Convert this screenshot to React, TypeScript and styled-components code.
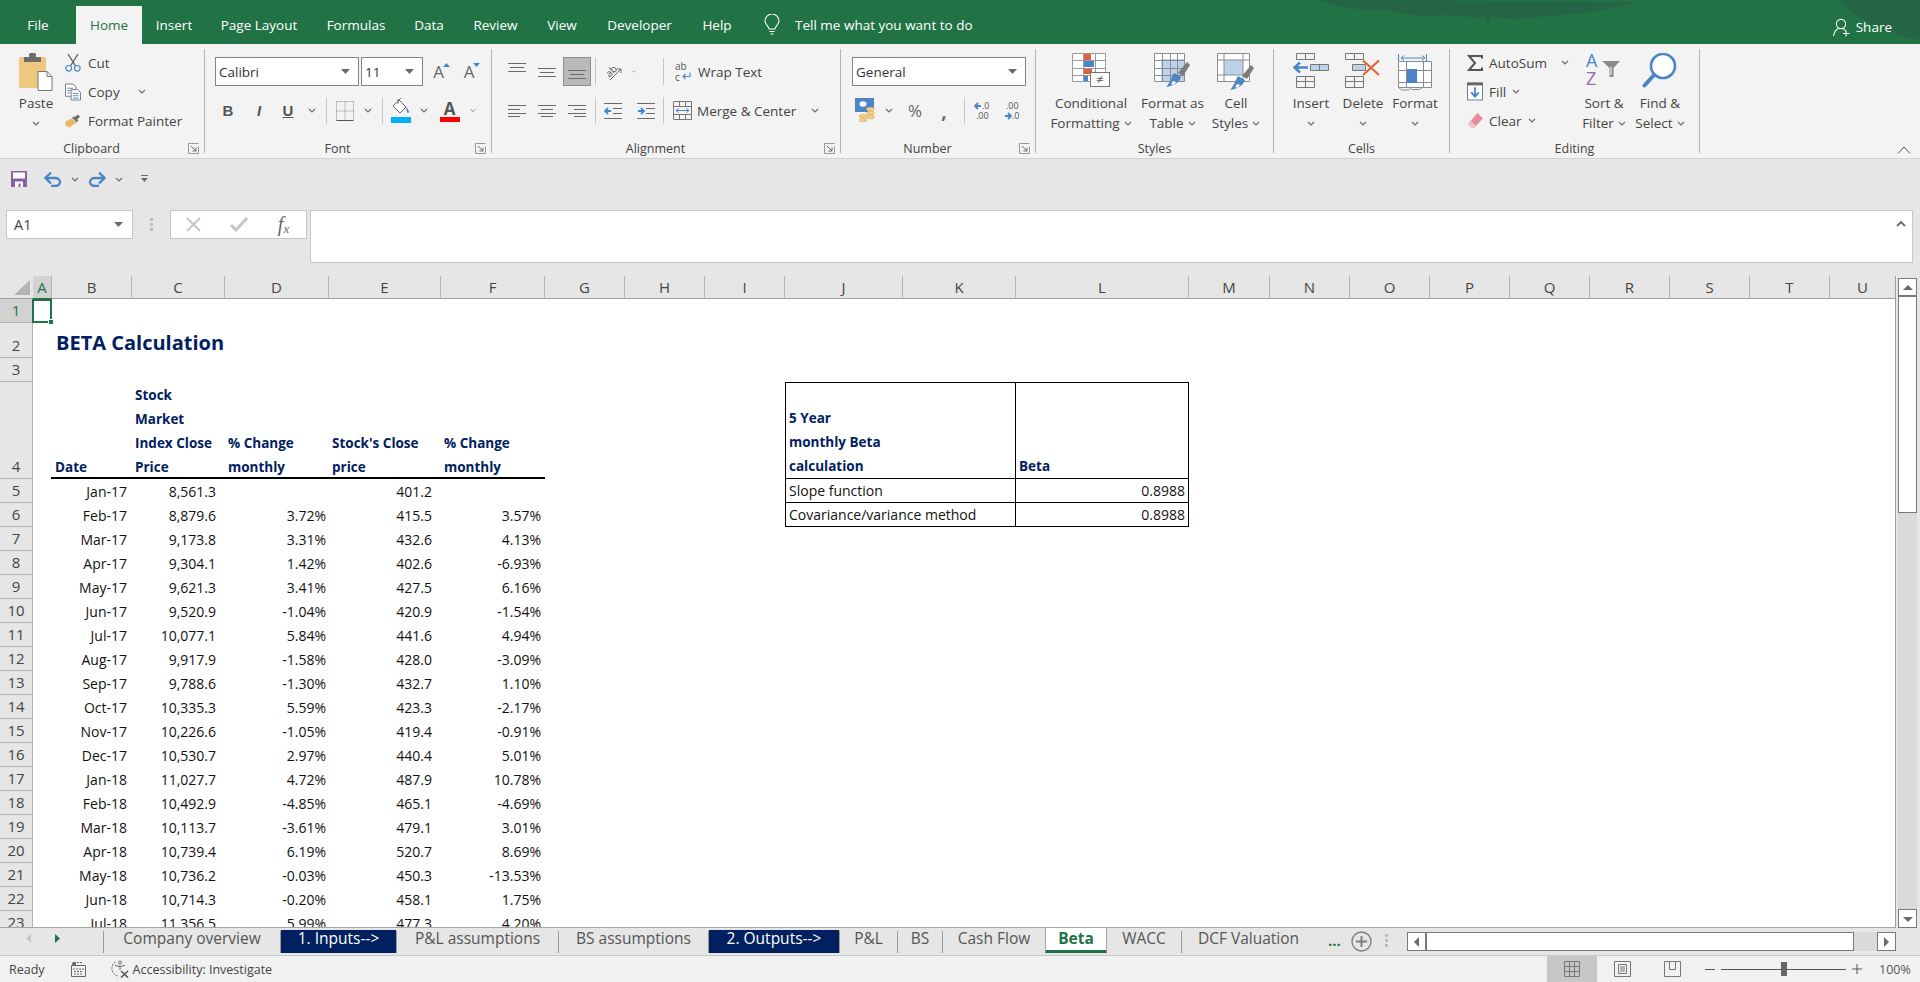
import React from "react";
import styled, { createGlobalStyle } from "styled-components";

const UI_FONT = `"Open Sans", "Noto Sans", sans-serif`;
const GRAY = "#6a6a6a";
const BLUE = "#4a86c5";
const PALE = "#bcd2e8";
const RED = "#e0623a";
const NAVY = "#002060";
const GREEN = "#217346";

const GlobalStyle = createGlobalStyle`
  html, body {
    margin: 0;
    padding: 0;
    background: #e6e6e6;
    overflow: hidden;
  }
  * {
    box-sizing: border-box;
  }
`;

const Page = styled.div`
  width: 1920px;
  height: 982px;
  display: flex;
  flex-direction: column;
  overflow: hidden;
  background: #e6e6e6;
  color: #444;
  font-family: ${UI_FONT};
  font-size: 13.5px;
`;

/* ---------- title bar ---------- */

const TitleBar = styled.div`
  position: relative;
  height: 44px;
  flex: none;
  display: flex;
  align-items: flex-end;
  background: ${GREEN};
  color: #fff;
  overflow: hidden;
`;

const Leaves = styled.svg`
  position: absolute;
  top: 0;
  right: 0;
`;

const MenuTab = styled.div<{ $w: number; $active?: boolean }>`
  position: relative;
  width: ${(p) => p.$w}px;
  height: 38px;
  line-height: 38px;
  text-align: center;
  white-space: nowrap;
  background: ${(p) => (p.$active ? "#f3f3f3" : "transparent")};
  color: ${(p) => (p.$active ? GREEN : "#fff")};
`;

const TellMe = styled.div`
  position: relative;
  height: 38px;
  margin-left: 18px;
  display: flex;
  align-items: center;
  gap: 15px;
`;

const Share = styled.div`
  position: relative;
  margin-left: auto;
  margin-right: 28px;
  height: 38px;
  display: flex;
  align-items: center;
  gap: 5px;
  padding-top: 4px;
`;

/* ---------- ribbon ---------- */

const Ribbon = styled.div`
  height: 115px;
  flex: none;
  display: flex;
  align-items: flex-start;
  padding-top: 5px;
  background: #f3f3f3;
  border-bottom: 1px solid #d2d2d2;
`;

const Group = styled.div<{ $w: number }>`
  width: ${(p) => p.$w}px;
  height: 104px;
  flex: none;
  display: flex;
  flex-direction: column;
  border-right: 1px solid #b4b4b4;
`;

const GroupBody = styled.div<{ $pl: number }>`
  height: 90px;
  flex: none;
  display: flex;
  padding-left: ${(p) => p.$pl}px;
`;

const GroupFoot = styled.div`
  height: 18px;
  margin-bottom: -4px;
  flex: none;
  display: flex;
  align-items: center;
  font-size: 12.5px;
`;

const GroupName = styled.div`
  flex: 1;
  text-align: center;
`;

const Launcher = styled.div`
  width: 21px;
  display: flex;
  justify-content: flex-start;
  padding-left: 5px;
`;

const Rows = styled.div`
  display: flex;
  flex-direction: column;
  gap: 10px;
  padding-top: 8px;
`;

const Row = styled.div`
  height: 29px;
  display: flex;
  align-items: center;
`;

const ListColumn = styled.div<{ $w?: number }>`
  width: ${(p) => (p.$w ? `${p.$w}px` : "auto")};
  display: flex;
  flex-direction: column;
  margin-top: -1px;
`;

const ListItem = styled.div<{ $gap: number }>`
  height: 29px;
  display: flex;
  align-items: center;
  gap: ${(p) => p.$gap}px;
  white-space: nowrap;
`;

const Slot = styled.div<{ $w: number; $ml?: number }>`
  width: ${(p) => p.$w}px;
  margin-left: ${(p) => p.$ml ?? 0}px;
  flex: none;
  display: flex;
  align-items: center;
  justify-content: center;
  color: #555;
`;

const PressedSlot = styled(Slot)`
  height: 29px;
  background: #b9b9b9;
  border: 1px solid #8e8e8e;
`;

const VSep = styled.div<{ $ml: number }>`
  width: 1px;
  height: 27px;
  flex: none;
  margin-left: ${(p) => p.$ml}px;
  background: #c6c6c6;
`;

const Combo = styled.div<{ $w: number; $ml?: number }>`
  width: ${(p) => p.$w}px;
  height: 29px;
  flex: none;
  margin-left: ${(p) => p.$ml ?? 0}px;
  display: flex;
  align-items: center;
  justify-content: space-between;
  padding: 0 8px 0 3px;
  background: #fff;
  border: 1px solid #848484;
  color: #333;
`;

const LabelledIcon = styled.div<{ $ml: number; $gap: number }>`
  display: flex;
  align-items: center;
  gap: ${(p) => p.$gap}px;
  margin-left: ${(p) => p.$ml}px;
  white-space: nowrap;
`;

const BigButton = styled.div<{ $w: number }>`
  width: ${(p) => p.$w}px;
  flex: none;
  display: flex;
  flex-direction: column;
  align-items: center;
  padding-top: 4px;
`;

const BigIcon = styled.div`
  height: 40px;
  display: flex;
  align-items: flex-start;
  justify-content: center;
`;

const BigLine = styled.div`
  height: 20px;
  line-height: 20px;
  display: flex;
  align-items: center;
  gap: 4px;
  white-space: nowrap;
`;

const GlyphBold = styled.span<{ $italic?: boolean; $underline?: boolean }>`
  font-size: 15px;
  font-weight: 700;
  color: #555;
  font-style: ${(p) => (p.$italic ? "italic" : "normal")};
  text-decoration: ${(p) => (p.$underline ? "underline" : "none")};
  font-family: "Liberation Sans", sans-serif;
`;

const SizeGlyph = styled.span`
  position: relative;
  font-size: 17px;
  line-height: 20px;
  color: #666;
`;

const SizeMark = styled.svg`
  position: absolute;
  top: 1px;
  right: -6px;
`;

const ColorGlyph = styled.span<{ $bar: string }>`
  width: 20px;
  display: flex;
  flex-direction: column;
  align-items: center;
  font-weight: 700;
  font-size: 17px;
  line-height: 17px;
  color: #555;
  border-bottom: 5px solid ${(p) => p.$bar};
`;

const PercentGlyph = styled.span`
  font-size: 17px;
  color: #666;
`;

const CommaGlyph = styled.span`
  font-size: 19px;
  font-weight: 700;
  line-height: 14px;
  color: #666;
`;

const Collapse = styled.div`
  margin-left: auto;
  margin-right: 9px;
  align-self: flex-end;
  margin-bottom: 4px;
  display: flex;
`;

/* ---------- quick access and formula bar ---------- */

const QuickAccess = styled.div`
  height: 40px;
  flex: none;
  display: flex;
  align-items: center;
  padding-left: 11px;
`;

const FormulaBar = styled.div`
  height: 53px;
  flex: none;
  margin-top: 11px;
  display: flex;
  align-items: flex-start;
  padding-left: 6px;
`;

const NameBox = styled.div`
  width: 127px;
  height: 29px;
  flex: none;
  display: flex;
  align-items: center;
  justify-content: space-between;
  padding: 0 9px 0 7px;
  background: #fff;
  border: 1px solid #c6c6c6;
  font-size: 14.5px;
  color: #444;
`;

const DotsSlot = styled.div`
  width: 37px;
  height: 29px;
  flex: none;
  display: flex;
  align-items: center;
  justify-content: center;
`;

const FxBox = styled.div`
  width: 137px;
  height: 29px;
  flex: none;
  display: flex;
  align-items: center;
  background: #fff;
  border: 1px solid #c6c6c6;
`;

const FxText = styled.span`
  font-family: "Liberation Serif", serif;
  font-style: italic;
  font-size: 20px;
  color: #666;

  sub {
    font-size: 13px;
    vertical-align: -2px;
  }
`;

const FormulaInput = styled.div`
  width: 1603px;
  height: 53px;
  margin-left: 3px;
  flex: none;
  display: flex;
  justify-content: flex-end;
  padding: 9px 6px 0 0;
  background: #fff;
  border: 1px solid #c6c6c6;
`;

/* ---------- sheet ---------- */

const SheetRow = styled.div`
  height: 651px;
  flex: none;
  margin-top: 13px;
  display: flex;
`;

const Grid = styled.div`
  width: 1896px;
  height: 651px;
  flex: none;
  overflow: hidden;
  display: grid;
  grid-template-columns: 33px 19px 80px 93px 104px 112px 104px 80px 80px 80px 118px 113px 173px 81px 80px 80px 80px 80px 80px 80px 80px 66px;
  grid-template-rows: 23px 24px 35px 24px 97px repeat(19, 24px);
  background: #fff;
  border-right: 1px solid #9e9e9e;
`;

const Corner = styled.div`
  grid-column: 1;
  grid-row: 1;
  background: #e6e6e6;
  border-bottom: 1px solid #9e9e9e;
  display: flex;
  align-items: flex-end;
  justify-content: flex-end;
  padding: 0 3px 3px 0;
`;

const ColHead = styled.div<{ $col: number; $on?: boolean }>`
  grid-column: ${(p) => p.$col};
  grid-row: 1;
  display: flex;
  align-items: center;
  justify-content: center;
  font-size: 15px;
  background: ${(p) => (p.$on ? "#d2d2d2" : "#e6e6e6")};
  color: ${(p) => (p.$on ? GREEN : "#444")};
  border-right: 1px solid #b4b4b4;
  border-bottom: 1px solid ${(p) => (p.$on ? GREEN : "#9e9e9e")};
`;

const RowHead = styled.div<{ $row: number; $on?: boolean }>`
  grid-column: 1;
  grid-row: ${(p) => p.$row};
  display: flex;
  align-items: flex-end;
  justify-content: center;
  line-height: 23px;
  font-size: 15px;
  background: ${(p) => (p.$on ? "#d2d2d2" : "#e6e6e6")};
  color: ${(p) => (p.$on ? GREEN : "#444")};
  border-right: 1px solid #b4b4b4;
  border-bottom: 1px solid #b4b4b4;
`;

const ActiveCell = styled.div`
  position: relative;
  grid-column: 2;
  grid-row: 2;
  margin-left: -1px;
  border: 2px solid ${GREEN};
`;

const FillHandle = styled.div`
  position: absolute;
  right: -4px;
  bottom: -4px;
  width: 6px;
  height: 6px;
  background: ${GREEN};
  border: 1px solid #fff;
`;

const SheetTitle = styled.div`
  grid-column: 3 / 6;
  grid-row: 3;
  align-self: end;
  padding-left: 4px;
  white-space: nowrap;
  font-size: 20px;
  line-height: 30px;
  font-weight: 700;
  color: ${NAVY};
`;

const HeadCell = styled.div<{ $col: number }>`
  grid-column: ${(p) => p.$col};
  grid-row: 5;
  align-self: end;
  padding-left: 3px;
  white-space: pre;
  line-height: 24px;
  margin-bottom: 0;
  font-size: 13.5px;
  font-weight: 700;
  color: ${NAVY};
`;

const HeadRule = styled.div`
  grid-column: 3 / 8;
  grid-row: 5;
  align-self: end;
  margin-left: -1px;
  height: 2px;
  background: #000;
`;

const DataCell = styled.div<{ $col: number; $row: number; $pr: number }>`
  grid-column: ${(p) => p.$col};
  grid-row: ${(p) => p.$row};
  align-self: end;
  text-align: right;
  padding-right: ${(p) => p.$pr}px;
  line-height: 22px;
  font-size: 14px;
  color: #111;
  white-space: nowrap;
`;

const BoxCell = styled.div<{
  $col: string;
  $row: number;
  $first?: boolean;
  $top?: boolean;
}>`
  grid-column: ${(p) => p.$col};
  grid-row: ${(p) => p.$row};
  display: flex;
  align-items: flex-end;
  padding: 0 3px;
  border-right: 1px solid #000;
  border-bottom: 1px solid #000;
  border-left: ${(p) => (p.$first ? "1px solid #000" : "none")};
  border-top: ${(p) => (p.$top ? "1px solid #000" : "none")};
  line-height: 23px;
  font-size: 14px;
  color: #111;
  white-space: nowrap;
`;

const BoxHead = styled(BoxCell)`
  color: ${NAVY};
  font-weight: 700;
  font-size: 13.5px;
  white-space: pre;
  line-height: 24px;
`;

const BoxValue = styled(BoxCell)`
  justify-content: flex-end;
`;

const VScroll = styled.div`
  width: 19px;
  height: 652px;
  flex: none;
  margin-left: 2px;
  display: flex;
  flex-direction: column;
  padding-top: 2px;
  position: relative;
  z-index: 1;
`;

const ScrollBtn = styled.div<{ $h: number }>`
  height: ${(p) => p.$h}px;
  flex: none;
  display: flex;
  align-items: center;
  justify-content: center;
  background: #fff;
  border: 1px solid #7a7a7a;
`;

const VThumb = styled.div`
  height: 217px;
  flex: none;
  background: #fff;
  border: 1px solid #7a7a7a;
`;

const VTrough = styled.div`
  flex: 1;
  background: #dadada;
`;

/* ---------- sheet tabs ---------- */

const TabArea = styled.div`
  height: 29px;
  flex: none;
  border-bottom: 1px solid #c8c8c8;
`;

const TabStrip = styled.div`
  width: 1896px;
  height: 28px;
  display: flex;
  align-items: flex-start;
  border-top: 1px solid #a5a5a5;
`;

const TabNav = styled.div`
  width: 103px;
  height: 27px;
  flex: none;
  display: flex;
  align-items: center;
  padding: 0 0 6px 26px;
  gap: 24px;
`;

const TabSep = styled.div`
  width: 1px;
  height: 22px;
  flex: none;
  margin-top: 3px;
  background: #9a9a9a;
`;

const SheetTab = styled.div<{ $w: number; $dark?: boolean }>`
  width: ${(p) => p.$w}px;
  height: 23px;
  flex: none;
  margin-top: 2px;
  text-align: center;
  line-height: 17px;
  font-size: 15.5px;
  white-space: nowrap;
  background: ${(p) => (p.$dark ? NAVY : "transparent")};
  color: ${(p) => (p.$dark ? "#fff" : "#555")};
`;

const CurrentTab = styled.div<{ $w: number }>`
  width: ${(p) => p.$w}px;
  height: 25px;
  flex: none;
  padding-top: 2px;
  text-align: center;
  line-height: 17px;
  font-size: 15.5px;
  font-weight: 700;
  background: #fff;
  color: ${GREEN};
  border-left: 1px solid #a5a5a5;
  border-right: 1px solid #a5a5a5;
  border-bottom: 3px solid ${GREEN};
`;

const MoreTabs = styled.div`
  width: 22px;
  margin-left: 13px;
  margin-top: 4px;
  flex: none;
  color: ${GREEN};
  font-weight: 700;
  font-size: 15px;
  line-height: 17px;
`;

const AddSheet = styled.div`
  margin-left: 1px;
  margin-top: 3px;
  display: flex;
`;

const TabDots = styled.div`
  margin-left: 13px;
  margin-top: 6px;
  display: flex;
`;

const HScroll = styled.div`
  margin-left: auto;
  margin-top: 4px;
  width: 489px;
  height: 19px;
  flex: none;
  display: flex;
  background: #dadada;
`;

const HBtn = styled.div`
  width: 19px;
  flex: none;
  display: flex;
  align-items: center;
  justify-content: center;
  background: #fff;
  border: 1px solid #7a7a7a;
`;

const HThumb = styled.div`
  width: 428px;
  flex: none;
  background: #fff;
  border: 1px solid #7a7a7a;
`;

const HTrough = styled.div`
  flex: 1;
`;

/* ---------- status bar ---------- */

const StatusBar = styled.div`
  height: 26px;
  flex: none;
  display: flex;
  align-items: center;
  padding-left: 9px;
  background: #f1f1f1;
  font-size: 12.5px;
  color: #444;
`;

const StatusIcon = styled.div<{ $ml: number }>`
  margin-left: ${(p) => p.$ml}px;
  display: flex;
`;

const ViewButtons = styled.div`
  margin-left: auto;
  align-self: stretch;
  display: flex;
`;

const ViewBtn = styled.div<{ $active?: boolean }>`
  width: 50px;
  display: flex;
  align-items: center;
  justify-content: center;
  background: ${(p) => (p.$active ? "#c6c6c6" : "transparent")};
`;

const Zoom = styled.div`
  display: flex;
  align-items: center;
  gap: 6px;
  margin-left: 8px;
  margin-right: 11px;
`;

const Slider = styled.div`
  position: relative;
  width: 125px;
  height: 1px;
  background: #555;
`;

const SliderThumb = styled.div`
  position: absolute;
  left: 60px;
  top: -7px;
  width: 6px;
  height: 14px;
  background: #666;
`;

const ZoomValue = styled.div`
  margin-left: 11px;
  width: 30px;
  color: #555;
`;

/* ---------- icons ---------- */

const Chevron = ({ color = GRAY }: { color?: string }) => (
  <svg width="8" height="5" viewBox="0 0 8 5" fill="none">
    <path d="M1 1l3 3 3-3" stroke={color} strokeWidth="1.1" />
  </svg>
);

const DropArrow = () => (
  <svg width="9" height="5" viewBox="0 0 9 5">
    <path d="M0 0h9L4.5 5z" fill={GRAY} />
  </svg>
);

const Triangle = ({ dir }: { dir: "up" | "down" | "left" | "right" }) => {
  const d = { up: "M0 6L5 1l5 5z", down: "M0 1h10L5 6z", left: "M7 0v10L2 5z", right: "M2 0v10l5-5z" }[dir];
  return (
    <svg width="10" height="10" viewBox="0 0 10 10" style={{ display: "block" }}>
      <path d={d} fill={GRAY} transform={dir === "up" || dir === "down" ? "translate(0 2)" : undefined} />
    </svg>
  );
};

const LaunchIcon = () => (
  <svg width="11" height="11" viewBox="0 0 11 11" fill="none" stroke={GRAY}>
    <path d="M.5 10.5V.5h10M.5 10.5h10v-7" stroke="#999" />
    <path d="M3 3l5 5M8 4.5V8H4.5" />
  </svg>
);

const Bulb = () => (
  <svg width="16" height="22" viewBox="0 0 16 22" fill="none" stroke="#fff" strokeWidth="1.1">
    <path d="M5 15c0-3-4-4-4-8a7 7 0 0 1 14 0c0 4-4 5-4 8z" />
    <path d="M5.5 17.5h5M6.5 20h3" />
  </svg>
);

const ShareIcon = () => (
  <svg width="18" height="19" viewBox="0 0 18 19" fill="none" stroke="#fff" strokeWidth="1.1">
    <circle cx="8" cy="6" r="4.6" />
    <path d="M.6 18c.4-4 2.6-6.6 5-7.6M10 10.5c1 .4 2 1.2 2.6 2.2M13 12.5v6M10 15.5h6.5" />
  </svg>
);

const PasteIcon = () => (
  <svg width="34" height="38" viewBox="0 0 34 38">
    <rect x="0" y="4" width="27" height="31" rx="1.5" fill="#edc87e" />
    <path d="M5 9V4h5V1.5A1.5 1.5 0 0 1 11.5 0h4A1.5 1.5 0 0 1 17 1.5V4h5v5z" fill="#6d6d6d" />
    <path d="M19 18.5h9l5 5v14H19z" fill="#fff" stroke="#777" />
    <path d="M28 18.5v5h5" fill="none" stroke="#777" />
  </svg>
);

const CutIcon = () => (
  <svg width="16" height="18" viewBox="0 0 16 18" fill="none">
    <path d="M3 0l7.5 12M13 0L5.5 12" stroke="#666" strokeWidth="1.4" />
    <circle cx="3.7" cy="14.3" r="2.8" stroke={BLUE} strokeWidth="1.2" />
    <circle cx="12.3" cy="14.3" r="2.8" stroke={BLUE} strokeWidth="1.2" />
  </svg>
);

const CopyIcon = () => (
  <svg width="17" height="18" viewBox="0 0 17 18" fill="#fff">
    <path d="M.5.5h8l3 3v10h-11z" stroke="#777" />
    <path d="M2.5 5h6M2.5 7.5h6M2.5 10h3" stroke={BLUE} fill="none" />
    <path d="M6.5 6.5h7l3 3v8h-10z" stroke="#777" />
    <path d="M8.5 10.5h6M8.5 13h6M8.5 15.5h6" stroke={BLUE} fill="none" />
  </svg>
);

const PainterIcon = () => (
  <svg width="17" height="16" viewBox="0 0 17 16">
    <path d="M7 5l5 5-4 2-2 3-1.500-1-1 1-1.500-2-1 .5L0 12l1-1-1-2 3-1.500z" fill="#e8b965" />
    <path d="M7.500 4.500l5 5 1.500-2-1-1 3-3L13.500 1l-3 3-1-1z" fill="#6d6d6d" />
  </svg>
);

const BorderIcon = () => (
  <svg width="18" height="20" viewBox="0 0 18 20" fill="none" stroke="#888" strokeDasharray="1 1">
    <path d="M.5.500h17v19H.5zM9 .5v19M.5 10h17" />
    <path d="M.5 19.500h17" stroke="#555" strokeDasharray="none" />
  </svg>
);

const FillIcon = () => (
  <svg width="20" height="25" viewBox="0 0 20 25">
    <path d="M8 2l7 7-6 6-7-7z" fill="#fff" stroke="#666" />
    <path d="M8 2l2 -2M7 6V1" fill="none" stroke="#666" />
    <path d="M15 9c2 2 3 4 3 5s-2 1-2 0z" fill={BLUE} />
    <rect y="19" width="20" height="6" fill="#00b0f0" />
  </svg>
);

const Lines = ({ rows, w = 18, h = 12 }: { rows: [number, number, number][]; w?: number; h?: number }) => (
  <svg width={w} height={h} viewBox={`0 0 ${w} ${h}`} stroke={GRAY} strokeWidth="1">
    {rows.map(([x1, x2, y]) => (
      <path key={`${x1}-${x2}-${y}`} d={`M${x1} ${y + 0.5}H${x2}`} />
    ))}
  </svg>
);

const AlignV = ({ top }: { top: number }) => (
  <svg width="18" height="18" viewBox="0 0 18 18" stroke={GRAY}>
    <path d={`M0 ${top + 0.5}h18M2 ${top + 4.5}h14M0 ${top + 8.5}h18`} />
  </svg>
);

const OrientIcon = () => (
  <svg width="18" height="20" viewBox="0 0 18 20" fill="none">
    <text x="1" y="13" fontSize="10" fontFamily="Open Sans" fill="#555" transform="rotate(-45 6 10)">
      ab
    </text>
    <path d="M5 18L16 7M16 7v4M16 7h-4" stroke={GRAY} />
  </svg>
);

const IndentIcon = ({ out }: { out?: boolean }) => (
  <svg width="18" height="16" viewBox="0 0 18 16" stroke={GRAY}>
    <path d="M0 .5h18M9 5.500h9M9 10.500h9M0 15.500h18" />
    <path d={out ? "M1 8h6M4 5L1 8l3 3" : "M1 8h6M4 5l3 3-3 3"} stroke={BLUE} strokeWidth="1.800" fill="none" />
  </svg>
);

const WrapIcon = () => (
  <svg width="17" height="20" viewBox="0 0 17 20" fill="none">
    <text x="0" y="8" fontSize="10" fontFamily="Open Sans" fill="#555">
      ab
    </text>
    <text x="0" y="19" fontSize="10" fontFamily="Open Sans" fill="#555">
      c
    </text>
    <path d="M15 10.500v4H8M10.500 12L8 14.500l2.500 2.500" stroke={BLUE} strokeWidth="1.100" />
  </svg>
);

const MergeIcon = () => (
  <svg width="19" height="19" viewBox="0 0 19 19" fill="none" stroke="#777">
    <path d="M.5.500h18v18H.5zM.5 5.500h18M.5 13.500h18M6.500.5v5M12.500.5v5M6.500 13.500v5M12.500 13.500v5" />
    <path d="M3 9.500h13M5.500 7.500l-2.500 2 2.500 2M13.500 7.500l2.500 2-2.500 2" stroke={BLUE} />
  </svg>
);

const AccountingIcon = () => (
  <svg width="20" height="25" viewBox="0 0 20 25">
    <path d="M0 0h19v11H13v3H0z" fill={BLUE} />
    <ellipse cx="8" cy="6" rx="3.500" ry="2.800" fill="#fff" />
    <g fill="#f0cd8a" stroke="#d8a84e" strokeWidth=".6">
      <ellipse cx="15.500" cy="11" rx="4" ry="1.800" />
      <ellipse cx="15.500" cy="15" rx="4" ry="1.800" />
      <ellipse cx="15.500" cy="19" rx="4" ry="1.800" />
      <ellipse cx="8" cy="18" rx="4" ry="1.800" />
      <ellipse cx="8" cy="22" rx="4" ry="1.800" />
    </g>
  </svg>
);

const DecimalIcon = ({ more }: { more?: boolean }) => (
  <svg width="19" height="20" viewBox="0 0 19 20">
    <g fontSize="9" fontFamily="Open Sans" fill="#555">
      <text x={more ? 9 : 3} y="8">
        {more ? ".0" : ".00"}
      </text>
      <text x={more ? 3 : 9} y="18">
        {more ? ".00" : ".0"}
      </text>
    </g>
    {more ? (
      <path d="M8 5H2M5 2L2 5l3 3" fill="none" stroke={BLUE} strokeWidth="1.800" />
    ) : (
      <path d="M2 15h6M5 12l3 3-3 3" fill="none" stroke={BLUE} strokeWidth="1.800" />
    )}
  </svg>
);

const GridLines = ({ w, h, cols, rows, color = "#858585" }: { w: number; h: number; cols: number; rows: number; color?: string }) => {
  const cw = w / cols;
  const rh = h / rows;
  let d = `M.5 .5H${w - 0.5}V${h - 0.5}H.5Z`;
  for (let i = 1; i < cols; i++) d += `M${Math.round(i * cw) + 0.5} 0V${h}`;
  for (let i = 1; i < rows; i++) d += `M0 ${Math.round(i * rh) + 0.5}H${w}`;
  return <path d={d} fill="none" stroke={color} />;
};

const BrushStroke = ({ x, y }: { x: number; y: number }) => (
  <g transform={`translate(${x} ${y})`}>
    <path d="M22 0l3 3-7 11-5-3z" fill="#7c7c7c" />
    <path d="M9 11l7 4c-2 6-8 9-15 10 4-4 5-9 8-14z" fill={BLUE} />
    <path d="M8 19l3 1-2 3-3-1z" fill="#fff" />
  </g>
);

const CondFormatIcon = () => (
  <svg width="38" height="34" viewBox="0 0 38 34">
    <rect width="34" height="29" fill="#fff" />
    <rect x="11" y="1" width="8" height="6" fill={RED} />
    <rect x="11" y="8" width="11" height="6" fill={BLUE} />
    <rect x="11" y="15" width="9" height="6" fill={RED} />
    <rect x="11" y="22" width="5" height="6" fill={BLUE} />
    <GridLines w={34} h={29} cols={3} rows={4} color="#9a9a9a" />
    <rect x="18.500" y="19.500" width="19" height="14" fill="#fff" stroke="#777" />
    <text x="24" y="31" fontSize="13" fontFamily="Open Sans" fill="#555">
      ≠
    </text>
  </svg>
);

const FormatTableIcon = () => (
  <svg width="38" height="36" viewBox="0 0 38 36">
    <rect width="31" height="29" fill="#fff" />
    <rect x="7" y="6" width="24" height="23" fill={PALE} />
    <GridLines w={31} h={29} cols={4} rows={4} color="#8c8c8c" />
    <BrushStroke x={11} y={9} />
  </svg>
);

const CellStylesIcon = () => (
  <svg width="38" height="39" viewBox="0 0 38 39">
    <rect width="33" height="29" fill="#fff" />
    <rect x="7" y="7" width="19" height="15" fill={PALE} />
    <path d="M.5.500h32v28H.5zM7 0v29M26 0v29M0 7h33M0 22h33" fill="none" stroke="#8c8c8c" />
    <BrushStroke x={12} y={12} />
  </svg>
);

const InsertIcon = () => (
  <svg width="36" height="35" viewBox="0 0 36 35" fill="none" stroke="#777">
    <path d="M3.500.5h18v6h-18zM12.500.5v6" />
    <path d="M17.500 11.500h18v6h-18z" fill={PALE} />
    <path d="M26.500 11.500v6" />
    <path d="M3.500 23.500h18v11h-18zM12.500 23.500v11M3.500 28.500h18" />
    <path d="M15 14.500H2M7 9.500l-5.500 5 5.500 5" stroke={BLUE} strokeWidth="2.400" />
  </svg>
);

const DeleteIcon = () => (
  <svg width="36" height="35" viewBox="0 0 36 35" fill="none" stroke="#777">
    <path d="M.5.500h18v6H.5zM9.500.5v6" />
    <path d="M7.500 11.500h13v6h-13z" fill={PALE} />
    <path d="M.5 23.500h18v11H.5zM9.500 23.500v11M.5 28.500h18" />
    <path d="M18 7.500l16 14.500M34 7.500L18 22" stroke={RED} strokeWidth="2.200" />
  </svg>
);

const FormatCellsIcon = () => (
  <svg width="35" height="38" viewBox="0 0 35 38" fill="none" stroke="#8c8c8c">
    <path d="M.5 8.500h33v26H.5zM8.500 8.500v26M25.500 8.500v26M.5 17.500h33M.5 29.500h33" fill="#fff" />
    <rect x="9" y="16" width="10" height="14" fill={BLUE} stroke="none" />
    <path d="M3 5h24M6 2.500L3 5l3 2.500M24 2.500L27 5l-3 2.500" stroke={BLUE} />
    <path d="M.5 1v7M28.500 1v7" stroke={BLUE} />
    <path d="M.5 34.500l3 2.500h7l3-2.500M13.500 36.500h8l3-2" />
  </svg>
);

const SigmaIcon = () => (
  <svg width="16" height="16" viewBox="0 0 16 16" fill="none">
    <path d="M15 3.500V1H2l6 7-6 7h13v-2.500" stroke="#555" strokeWidth="2" />
  </svg>
);

const FillDownIcon = () => (
  <svg width="17" height="19" viewBox="0 0 17 19">
    <rect x=".5" y=".5" width="16" height="18" fill="#fff" stroke="#777" />
    <rect width="17" height="3" fill="#666" />
    <path d="M8.500 5v9M4.500 10.500L8.500 15l4-4.500" fill="none" stroke={BLUE} strokeWidth="2" />
  </svg>
);

const EraserIcon = () => (
  <svg width="16" height="16" viewBox="0 0 16 16">
    <path d="M10.500 0L16 5.500 7 15H5L1 11z" fill="#e98b9a" />
    <path d="M4 8l5 5-2 2H5l-4-4z" fill="#f2c2ca" />
  </svg>
);

const SortIcon = () => (
  <svg width="36" height="33" viewBox="0 0 36 33">
    <text x="0" y="14" fontSize="18" fontFamily="Open Sans" fontWeight="400" fill={BLUE}>
      A
    </text>
    <text x="0" y="32" fontSize="18" fontFamily="Open Sans" fontWeight="400" fill="#9b6ab5">
      Z
    </text>
    <path d="M16 8h18l-6.500 7v9h-4v-9z" fill="#8a8a8a" />
    <path d="M25 14v8" stroke="#fff" />
  </svg>
);

const FindIcon = () => (
  <svg width="36" height="35" viewBox="0 0 36 35" fill="none" stroke={BLUE}>
    <circle cx="21" cy="13" r="12" strokeWidth="2.600" fill="#fff" />
    <path d="M12 22L2.500 32.500" strokeWidth="4" strokeLinecap="round" />
  </svg>
);

const SaveIcon = () => (
  <svg width="16" height="16" viewBox="0 0 16 16">
    <path d="M0 0h16v16H0z" fill="#8b5ea8" />
    <rect x="2" y="1.500" width="12" height="6" fill="#fff" />
    <path d="M4 16v-5.500h8V16h-2.500v-3.500H7.500V16z" fill="#fff" />
  </svg>
);

const UndoIcon = ({ flip }: { flip?: boolean }) => (
  <svg width="18" height="15" viewBox="0 0 18 15" fill="none" style={flip ? { transform: "scaleX(-1)" } : undefined}>
    <path d="M2 6h9a5 4 0 0 1 0 8H7" stroke={BLUE} strokeWidth="2.400" />
    <path d="M7 .5L1.500 6 7 11.500" stroke={BLUE} strokeWidth="2.400" />
  </svg>
);

const CustomizeIcon = () => (
  <svg width="7" height="8" viewBox="0 0 7 8" fill={GRAY}>
    <rect width="7" height="1" />
    <path d="M0 3h7L3.500 7z" />
  </svg>
);

const DotsIcon = ({ color = "#bcbcbc" }: { color?: string }) => (
  <svg width="3" height="13" viewBox="0 0 3 13" fill={color}>
    <rect width="3" height="3" />
    <rect y="5" width="3" height="3" />
    <rect y="10" width="3" height="3" />
  </svg>
);

const CrossIcon = () => (
  <svg width="15" height="15" viewBox="0 0 15 15" fill="none" stroke="#c6c6c6" strokeWidth="2">
    <path d="M1 1l13 13M14 1L1 14" />
  </svg>
);

const CheckIcon = () => (
  <svg width="18" height="15" viewBox="0 0 18 15" fill="none" stroke="#c6c6c6" strokeWidth="3">
    <path d="M1 8l5 5L17 1" />
  </svg>
);

const CornerMark = () => (
  <svg width="16" height="15" viewBox="0 0 16 15">
    <path d="M16 0v15H0z" fill="#b4b4b4" />
  </svg>
);

const AddIcon = () => (
  <svg width="21" height="21" viewBox="0 0 21 21" fill="none" stroke="#7f7f7f">
    <circle cx="10.500" cy="10.500" r="9.500" strokeWidth="1.400" />
    <path d="M10.500 5v11M5 10.500h11" strokeWidth="2" />
  </svg>
);

const NavArrow = ({ color, right }: { color: string; right?: boolean }) => (
  <svg width="5" height="9" viewBox="0 0 5 9">
    <path d={right ? "M0 0l5 4.500L0 9z" : "M5 0L0 4.500 5 9z"} fill={color} />
  </svg>
);

const MacroIcon = () => (
  <svg width="15" height="15" viewBox="0 0 15 15" fill="none" stroke="#666">
    <path d="M.5 3.500h14v11H.5z" />
    <path d="M3 .5h9M2 7h11M3 9.500h9M3 12h9" strokeDasharray="2 1" />
    <circle cx="3" cy="2" r="2" fill="#666" stroke="none" />
  </svg>
);

const AccessIcon = () => (
  <svg width="20" height="18" viewBox="0 0 20 18" fill="none" stroke="#666">
    <path d="M5.500 2C2 4 .8 8.500 3 12.500c1 1.600 2.500 3 4.500 3.500" strokeDasharray="2 1.200" />
    <circle cx="10" cy="2.500" r="1.500" />
    <path d="M5 5.500l5 1 5-1M10 6.500V10" />
    <path d="M11 11l7 6.500M18 11l-7 6.500" stroke="#555" strokeWidth="1.600" />
  </svg>
);

const NormalIcon = () => (
  <svg width="16" height="16" viewBox="0 0 16 16" fill="none" stroke="#777">
    <path d="M.5.500h15v15H.5zM5.500 0v16M10.500 0v16M0 5.500h16M0 10.500h16" />
  </svg>
);

const LayoutIcon = () => (
  <svg width="17" height="16" viewBox="0 0 17 16" fill="none" stroke="#777">
    <path d="M.5.500h16v15H.5zM4.500 3.500h8v9h-8zM6 6h5M6 8h5M6 10h5" />
  </svg>
);

const BreakIcon = () => (
  <svg width="17" height="16" viewBox="0 0 17 16" fill="none" stroke="#777">
    <path d="M.5.500h16v15H.5zM5.500.5v8h6v-8" />
  </svg>
);

const PlusMinus = ({ plus }: { plus?: boolean }) => (
  <svg width="10" height="10" viewBox="0 0 10 10" stroke="#555">
    <path d={plus ? "M0 5h10M5 0v10" : "M0 5.500h10"} />
  </svg>
);

/* ---------- data ---------- */

const MENU: [string, number][] = [
  ["Insert", 64],
  ["Page Layout", 106],
  ["Formulas", 88],
  ["Data", 58],
  ["Review", 75],
  ["View", 58],
  ["Developer", 97],
  ["Help", 58],
];

const COLUMNS = "ABCDEFGHIJKLMNOPQRSTU".split("");

const PRICES: [string, string, string, string, string][] = [
  ["Jan-17", "8,561.3", "", "401.2", ""],
  ["Feb-17", "8,879.6", "3.72%", "415.5", "3.57%"],
  ["Mar-17", "9,173.8", "3.31%", "432.6", "4.13%"],
  ["Apr-17", "9,304.1", "1.42%", "402.6", "-6.93%"],
  ["May-17", "9,621.3", "3.41%", "427.5", "6.16%"],
  ["Jun-17", "9,520.9", "-1.04%", "420.9", "-1.54%"],
  ["Jul-17", "10,077.1", "5.84%", "441.6", "4.94%"],
  ["Aug-17", "9,917.9", "-1.58%", "428.0", "-3.09%"],
  ["Sep-17", "9,788.6", "-1.30%", "432.7", "1.10%"],
  ["Oct-17", "10,335.3", "5.59%", "423.3", "-2.17%"],
  ["Nov-17", "10,226.6", "-1.05%", "419.4", "-0.91%"],
  ["Dec-17", "10,530.7", "2.97%", "440.4", "5.01%"],
  ["Jan-18", "11,027.7", "4.72%", "487.9", "10.78%"],
  ["Feb-18", "10,492.9", "-4.85%", "465.1", "-4.69%"],
  ["Mar-18", "10,113.7", "-3.61%", "479.1", "3.01%"],
  ["Apr-18", "10,739.4", "6.19%", "520.7", "8.69%"],
  ["May-18", "10,736.2", "-0.03%", "450.3", "-13.53%"],
  ["Jun-18", "10,714.3", "-0.20%", "458.1", "1.75%"],
  ["Jul-18", "11,356.5", "5.99%", "477.3", "4.20%"],
];

// right padding of each data column, B to F
const CELL_PADDING = [5, 9, 3, 9, 4];

const RowNumberLabels = Array.from({ length: 23 }, (_, i) => i + 1);

/* ---------- page ---------- */

function RibbonBar() {
  return (
    <Ribbon>
      <Group $w={205}>
        <GroupBody $pl={7}>
          <BigButton $w={58}>
            <BigIcon>
              <PasteIcon />
            </BigIcon>
            <BigLine>Paste</BigLine>
            <BigLine>
              <Chevron />
            </BigLine>
          </BigButton>
          <ListColumn>
            <ListItem $gap={7}>
              <Slot $w={16}>
                <CutIcon />
              </Slot>
              Cut
            </ListItem>
            <ListItem $gap={7}>
              <Slot $w={16}>
                <CopyIcon />
              </Slot>
              Copy
              <Slot $w={30}>
                <Chevron />
              </Slot>
            </ListItem>
            <ListItem $gap={7}>
              <Slot $w={16}>
                <PainterIcon />
              </Slot>
              Format Painter
            </ListItem>
          </ListColumn>
        </GroupBody>
        <GroupFoot>
          <GroupName>Clipboard</GroupName>
          <Launcher>
            <LaunchIcon />
          </Launcher>
        </GroupFoot>
      </Group>

      <Group $w={287}>
        <GroupBody $pl={10}>
          <Rows>
            <Row>
              <Combo $w={144}>
                Calibri
                <DropArrow />
              </Combo>
              <Combo $w={62} $ml={2}>
                11
                <DropArrow />
              </Combo>
              <Slot $w={31}>
                <SizeGlyph>
                  A
                  <SizeMark width="7" height="4" viewBox="0 0 7 4">
                    <path d="M0 4l3.500-4L7 4z" fill={BLUE} />
                  </SizeMark>
                </SizeGlyph>
              </Slot>
              <Slot $w={30}>
                <SizeGlyph>
                  A
                  <SizeMark width="7" height="4" viewBox="0 0 7 4">
                    <path d="M0 0l3.500 4L7 0z" fill={BLUE} />
                  </SizeMark>
                </SizeGlyph>
              </Slot>
            </Row>
            <Row>
              <Slot $w={26}>
                <GlyphBold>B</GlyphBold>
              </Slot>
              <Slot $w={36}>
                <GlyphBold $italic>I</GlyphBold>
              </Slot>
              <Slot $w={22}>
                <GlyphBold $underline>U</GlyphBold>
              </Slot>
              <Slot $w={26}>
                <Chevron />
              </Slot>
              <VSep $ml={1} />
              <Slot $w={35}>
                <BorderIcon />
              </Slot>
              <Slot $w={12}>
                <Chevron />
              </Slot>
              <VSep $ml={8} />
              <Slot $w={36}>
                <FillIcon />
              </Slot>
              <Slot $w={10}>
                <Chevron />
              </Slot>
              <Slot $w={41}>
                <ColorGlyph $bar="#ff0000">A</ColorGlyph>
              </Slot>
              <Slot $w={6}>
                <Chevron />
              </Slot>
            </Row>
          </Rows>
        </GroupBody>
        <GroupFoot>
          <GroupName>Font</GroupName>
          <Launcher>
            <LaunchIcon />
          </Launcher>
        </GroupFoot>
      </Group>

      <Group $w={349}>
        <GroupBody $pl={10}>
          <Rows>
            <Row>
              <Slot $w={30}>
                <AlignV top={0} />
              </Slot>
              <Slot $w={30}>
                <AlignV top={5} />
              </Slot>
              <PressedSlot $w={28} $ml={1}>
                <AlignV top={7} />
              </PressedSlot>
              <VSep $ml={4} />
              <Slot $w={36}>
                <OrientIcon />
              </Slot>
              <Slot $w={4}>
                <Chevron />
              </Slot>
              <VSep $ml={27} />
              <LabelledIcon $ml={11} $gap={6}>
                <WrapIcon />
                Wrap Text
              </LabelledIcon>
            </Row>
            <Row>
              <Slot $w={30}>
                <Lines rows={[[0, 18, 0], [0, 12, 4], [0, 18, 8], [0, 12, 11]]} />
              </Slot>
              <Slot $w={30}>
                <Lines rows={[[0, 18, 0], [3, 15, 4], [0, 18, 8], [3, 15, 11]]} />
              </Slot>
              <Slot $w={30}>
                <Lines rows={[[0, 18, 0], [6, 18, 4], [0, 18, 8], [6, 18, 11]]} />
              </Slot>
              <VSep $ml={3} />
              <Slot $w={34}>
                <IndentIcon out />
              </Slot>
              <Slot $w={32}>
                <IndentIcon />
              </Slot>
              <VSep $ml={1} />
              <LabelledIcon $ml={9} $gap={5}>
                <MergeIcon />
                Merge &amp; Center
              </LabelledIcon>
              <Slot $w={8} $ml={15}>
                <Chevron />
              </Slot>
            </Row>
          </Rows>
        </GroupBody>
        <GroupFoot>
          <GroupName>Alignment</GroupName>
          <Launcher>
            <LaunchIcon />
          </Launcher>
        </GroupFoot>
      </Group>

      <Group $w={195}>
        <GroupBody $pl={11}>
          <Rows>
            <Row>
              <Combo $w={174}>
                General
                <DropArrow />
              </Combo>
            </Row>
            <Row>
              <Slot $w={26}>
                <AccountingIcon />
              </Slot>
              <Slot $w={22}>
                <Chevron />
              </Slot>
              <Slot $w={30}>
                <PercentGlyph>%</PercentGlyph>
              </Slot>
              <Slot $w={28}>
                <CommaGlyph>,</CommaGlyph>
              </Slot>
              <VSep $ml={6} />
              <Slot $w={34}>
                <DecimalIcon more />
              </Slot>
              <Slot $w={26}>
                <DecimalIcon />
              </Slot>
            </Row>
          </Rows>
        </GroupBody>
        <GroupFoot>
          <GroupName>Number</GroupName>
          <Launcher>
            <LaunchIcon />
          </Launcher>
        </GroupFoot>
      </Group>

      <Group $w={238}>
        <GroupBody $pl={12}>
          <BigButton $w={86}>
            <BigIcon>
              <CondFormatIcon />
            </BigIcon>
            <BigLine>Conditional</BigLine>
            <BigLine>
              Formatting
              <Chevron />
            </BigLine>
          </BigButton>
          <BigButton $w={77}>
            <BigIcon>
              <FormatTableIcon />
            </BigIcon>
            <BigLine>Format as</BigLine>
            <BigLine>
              Table
              <Chevron />
            </BigLine>
          </BigButton>
          <BigButton $w={50}>
            <BigIcon>
              <CellStylesIcon />
            </BigIcon>
            <BigLine>Cell</BigLine>
            <BigLine>
              Styles
              <Chevron />
            </BigLine>
          </BigButton>
        </GroupBody>
        <GroupFoot>
          <GroupName>Styles</GroupName>
        </GroupFoot>
      </Group>

      <Group $w={176}>
        <GroupBody $pl={11}>
          <BigButton $w={52}>
            <BigIcon>
              <InsertIcon />
            </BigIcon>
            <BigLine>Insert</BigLine>
            <BigLine>
              <Chevron />
            </BigLine>
          </BigButton>
          <BigButton $w={52}>
            <BigIcon>
              <DeleteIcon />
            </BigIcon>
            <BigLine>Delete</BigLine>
            <BigLine>
              <Chevron />
            </BigLine>
          </BigButton>
          <BigButton $w={52}>
            <BigIcon>
              <FormatCellsIcon />
            </BigIcon>
            <BigLine>Format</BigLine>
            <BigLine>
              <Chevron />
            </BigLine>
          </BigButton>
        </GroupBody>
        <GroupFoot>
          <GroupName>Cells</GroupName>
        </GroupFoot>
      </Group>

      <Group $w={250}>
        <GroupBody $pl={17}>
          <ListColumn $w={109}>
            <ListItem $gap={6}>
              <Slot $w={16}>
                <SigmaIcon />
              </Slot>
              AutoSum
              <Slot $w={8} $ml={8}>
                <Chevron />
              </Slot>
            </ListItem>
            <ListItem $gap={6}>
              <Slot $w={16}>
                <FillDownIcon />
              </Slot>
              Fill
              <Chevron />
            </ListItem>
            <ListItem $gap={6}>
              <Slot $w={16}>
                <EraserIcon />
              </Slot>
              Clear
              <Chevron />
            </ListItem>
          </ListColumn>
          <BigButton $w={56}>
            <BigIcon>
              <SortIcon />
            </BigIcon>
            <BigLine>Sort &amp;</BigLine>
            <BigLine>
              Filter
              <Chevron />
            </BigLine>
          </BigButton>
          <BigButton $w={56}>
            <BigIcon>
              <FindIcon />
            </BigIcon>
            <BigLine>Find &amp;</BigLine>
            <BigLine>
              Select
              <Chevron />
            </BigLine>
          </BigButton>
        </GroupBody>
        <GroupFoot>
          <GroupName>Editing</GroupName>
        </GroupFoot>
      </Group>

      <Collapse>
        <svg width="14" height="8" viewBox="0 0 14 8" fill="none" stroke="#555">
          <path d="M1 7.500L7 1l6 6.500" />
        </svg>
      </Collapse>
    </Ribbon>
  );
}

function Sheet() {
  return (
    <SheetRow>
      <Grid>
        <Corner>
          <CornerMark />
        </Corner>
        {COLUMNS.map((name, i) => (
          <ColHead key={name} $col={i + 2} $on={i === 0}>
            {name}
          </ColHead>
        ))}
        {RowNumberLabels.map((n) => (
          <RowHead key={n} $row={n + 1} $on={n === 1}>
            {n}
          </RowHead>
        ))}
        <ActiveCell>
          <FillHandle />
        </ActiveCell>

        <SheetTitle>BETA Calculation</SheetTitle>

        <HeadCell $col={3}>Date</HeadCell>
        <HeadCell $col={4}>{"Stock\nMarket\nIndex Close\nPrice"}</HeadCell>
        <HeadCell $col={5}>{"% Change\nmonthly"}</HeadCell>
        <HeadCell $col={6}>{"Stock's Close\nprice"}</HeadCell>
        <HeadCell $col={7}>{"% Change\nmonthly"}</HeadCell>
        <HeadRule />

        {PRICES.map((row, r) =>
          row.map((value, c) => (
            <DataCell key={`${r}-${c}`} $col={c + 3} $row={r + 6} $pr={CELL_PADDING[c]}>
              {value}
            </DataCell>
          ))
        )}

        <BoxHead $col="11 / 13" $row={5} $first $top>
          {"5 Year\nmonthly Beta\ncalculation"}
        </BoxHead>
        <BoxHead $col="13" $row={5} $top>
          Beta
        </BoxHead>
        <BoxCell $col="11 / 13" $row={6} $first>
          Slope function
        </BoxCell>
        <BoxValue $col="13" $row={6}>
          0.8988
        </BoxValue>
        <BoxCell $col="11 / 13" $row={7} $first>
          Covariance/variance method
        </BoxCell>
        <BoxValue $col="13" $row={7}>
          0.8988
        </BoxValue>
      </Grid>
      <VScroll>
        <ScrollBtn $h={18}>
          <Triangle dir="up" />
        </ScrollBtn>
        <VThumb />
        <VTrough />
        <ScrollBtn $h={19}>
          <Triangle dir="down" />
        </ScrollBtn>
      </VScroll>
    </SheetRow>
  );
}

function SheetTabs() {
  return (
    <TabArea>
      <TabStrip>
        <TabNav>
          <NavArrow color="#c6c6c6" />
          <NavArrow color={GREEN} right />
        </TabNav>
        <TabSep />
        <SheetTab $w={176}>Company overview</SheetTab>
        <TabSep />
        <SheetTab $w={115} $dark>
          1. Inputs--&gt;
        </SheetTab>
        <TabSep />
        <SheetTab $w={161}>P&amp;L assumptions</SheetTab>
        <TabSep />
        <SheetTab $w={149}>BS assumptions</SheetTab>
        <TabSep />
        <SheetTab $w={130} $dark>
          2. Outputs--&gt;
        </SheetTab>
        <TabSep />
        <SheetTab $w={57}>P&amp;L</SheetTab>
        <TabSep />
        <SheetTab $w={44}>BS</SheetTab>
        <TabSep />
        <SheetTab $w={102}>Cash Flow</SheetTab>
        <CurrentTab $w={62}>Beta</CurrentTab>
        <SheetTab $w={74}>WACC</SheetTab>
        <TabSep />
        <SheetTab $w={133}>DCF Valuation</SheetTab>
        <MoreTabs>...</MoreTabs>
        <AddSheet>
          <AddIcon />
        </AddSheet>
        <TabDots>
          <DotsIcon />
        </TabDots>
        <HScroll>
          <HBtn>
            <Triangle dir="left" />
          </HBtn>
          <HThumb />
          <HTrough />
          <HBtn>
            <Triangle dir="right" />
          </HBtn>
        </HScroll>
      </TabStrip>
    </TabArea>
  );
}

export default function App() {
  return (
    <>
      <GlobalStyle />
      <Page>
        <TitleBar>
          <Leaves width="600" height="44" viewBox="0 0 600 44" fill="#256546">
            <path d="M0 0c8 5 30 10 62 10 16 0 32 8 50 6 20-3 32 2 53 2l3 6 3-8c14 4 30 4 45 1 40-3 78-6 100-15z" />
            <path d="M520 0c10 12 30 30 80 40V0z" />
          </Leaves>
          <MenuTab $w={76}>File</MenuTab>
          <MenuTab $w={66} $active>
            Home
          </MenuTab>
          {MENU.map(([name, w]) => (
            <MenuTab key={name} $w={w}>
              {name}
            </MenuTab>
          ))}
          <TellMe>
            <Bulb />
            Tell me what you want to do
          </TellMe>
          <Share>
            <ShareIcon />
            Share
          </Share>
        </TitleBar>

        <RibbonBar />

        <QuickAccess>
          <SaveIcon />
          <Slot $w={18} $ml={17}>
            <UndoIcon />
          </Slot>
          <Slot $w={8} $ml={9}>
            <Chevron />
          </Slot>
          <Slot $w={18} $ml={9}>
            <UndoIcon flip />
          </Slot>
          <Slot $w={8} $ml={9}>
            <Chevron />
          </Slot>
          <Slot $w={7} $ml={18}>
            <CustomizeIcon />
          </Slot>
        </QuickAccess>

        <FormulaBar>
          <NameBox>
            A1
            <DropArrow />
          </NameBox>
          <DotsSlot>
            <DotsIcon />
          </DotsSlot>
          <FxBox>
            <Slot $w={45}>
              <CrossIcon />
            </Slot>
            <Slot $w={46}>
              <CheckIcon />
            </Slot>
            <Slot $w={43}>
              <FxText>
                f<sub>x</sub>
              </FxText>
            </Slot>
          </FxBox>
          <FormulaInput>
            <svg width="10" height="7" viewBox="0 0 10 7" fill="none" stroke={GRAY} strokeWidth="1.800">
              <path d="M1 6l4-4 4 4" />
            </svg>
          </FormulaInput>
        </FormulaBar>

        <Sheet />
        <SheetTabs />

        <StatusBar>
          Ready
          <StatusIcon $ml={26}>
            <MacroIcon />
          </StatusIcon>
          <StatusIcon $ml={24}>
            <AccessIcon />
          </StatusIcon>
          <StatusIcon $ml={3}>Accessibility: Investigate</StatusIcon>
          <ViewButtons>
            <ViewBtn $active>
              <NormalIcon />
            </ViewBtn>
            <ViewBtn>
              <LayoutIcon />
            </ViewBtn>
            <ViewBtn>
              <BreakIcon />
            </ViewBtn>
            <Zoom>
              <PlusMinus />
              <Slider>
                <SliderThumb />
              </Slider>
              <PlusMinus plus />
              <ZoomValue>100%</ZoomValue>
            </Zoom>
          </ViewButtons>
        </StatusBar>
      </Page>
    </>
  );
}
